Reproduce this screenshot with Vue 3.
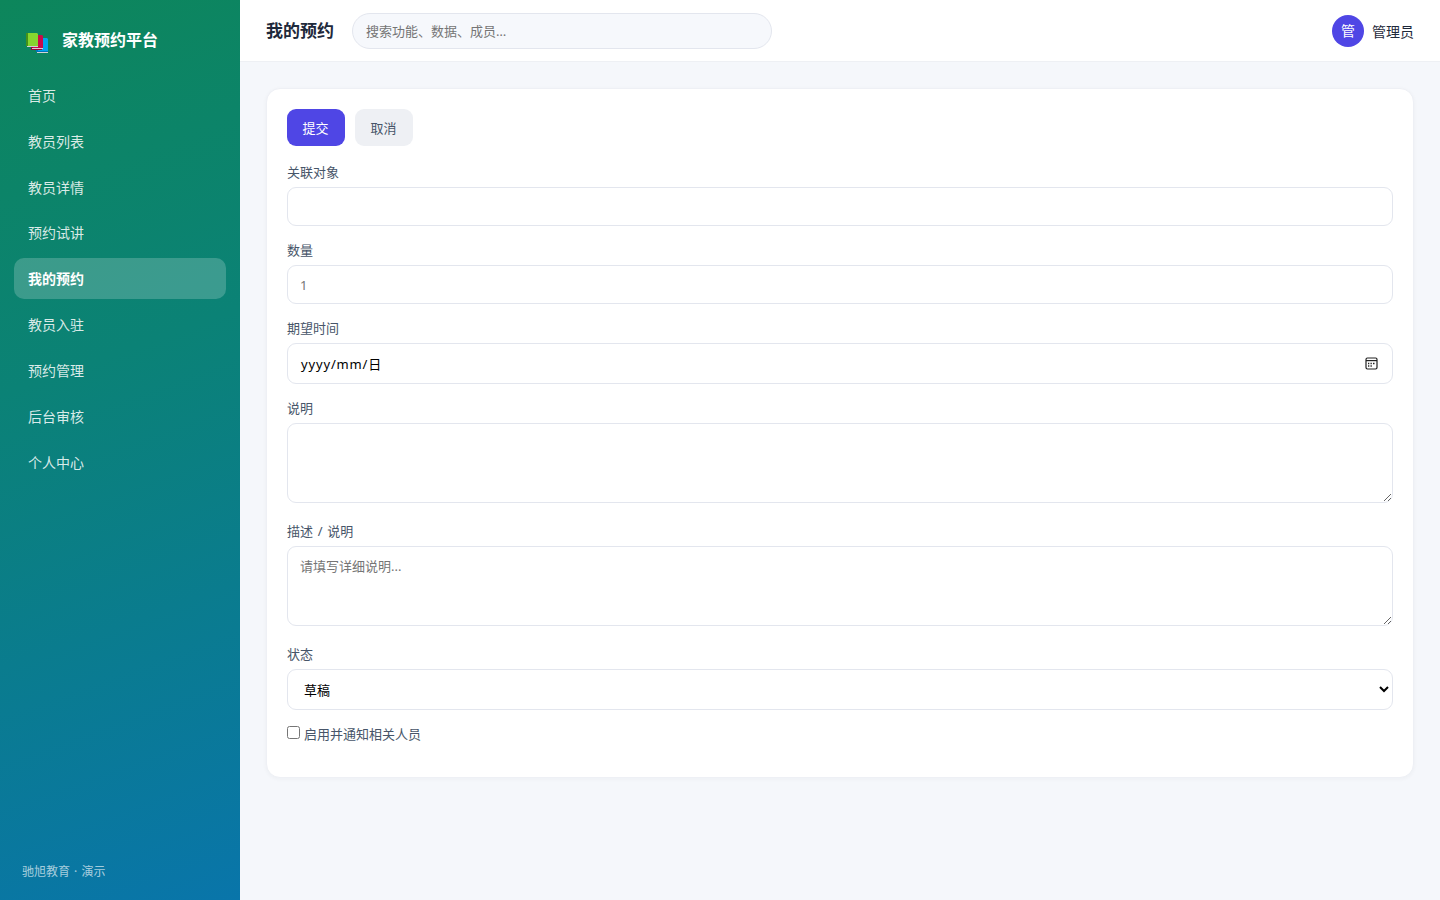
<template>
  <div class="app-shell">
    <aside class="sidebar">
      <div class="brand">
        <svg class="brand-icon" width="22" height="20" viewBox="0 0 22 20">
          <path d="M11 5h10l1 1v13H11z" fill="#00a6ed" />
          <path d="M10 17h12v2H10z" fill="#0074ba" />
          <path d="M12 17h10v1H12z" fill="#00a6ed" />
          <path d="M11 19h11v1H11z" fill="#d3d3d3" />
          <path d="M6 2h10l1 1v12H6z" fill="#ca0b4a" />
          <path d="M5 14h2v3H5zM5 16h11v1H5z" fill="#990838" />
          <path d="M6 15h11v1H6z" fill="#d3d3d3" />
          <path d="M0 0h11l1 1v12H0z" fill="#86d72f" />
          <path d="M0 0h2v13H0z" fill="#44911b" />
          <path d="M1 13h11v1H1z" fill="#d3d3d3" />
        </svg>
        <span>家教预约平台</span>
      </div>
      <nav class="nav">
        <a v-for="item in menu" :key="item" class="nav-item" :class="{ active: item === current }" @click="current = item">{{ item }}</a>
      </nav>
      <div class="side-foot">驰旭教育 · 演示</div>
    </aside>

    <div class="main">
      <header class="topbar">
        <h1>{{ current }}</h1>
        <input v-model="keyword" class="search" placeholder="搜索功能、数据、成员…" />
        <div class="user">
          <span class="avatar">管</span>
          <span>管理员</span>
        </div>
      </header>

      <main class="content">
        <form class="card" @submit.prevent>
          <div class="actions">
            <button class="btn btn-primary" type="submit">提交</button>
            <button class="btn btn-ghost" type="button" @click="reset">取消</button>
          </div>
          <div class="field">
            <label>关联对象</label>
            <input v-model="form.target" class="control" />
          </div>
          <div class="field">
            <label>数量</label>
            <input v-model="form.count" class="control" placeholder="1" />
          </div>
          <div class="field">
            <label>期望时间</label>
            <div class="control tall date">
              <span>yyyy/mm/日</span>
              <svg width="13" height="13" viewBox="0 0 13 13">
                <rect x="1" y="1" width="11" height="11" rx="1.4" fill="none" stroke="#222" stroke-width="1.2" />
                <path d="M1 3.6h11" stroke="#222" stroke-width="1.2" />
                <path d="M5.5 6.5h1.3M8 6.5h1.5M3 6.5h1.3M3 9h1.3M5.5 9h1.3" stroke="#222" stroke-width="1.3" />
              </svg>
            </div>
          </div>
          <div class="field area">
            <label>说明</label>
            <textarea v-model="form.note" class="control"></textarea>
          </div>
          <div class="field area">
            <label class="wide">描述 / 说明</label>
            <textarea v-model="form.desc" class="control" placeholder="请填写详细说明..."></textarea>
          </div>
          <div class="field">
            <label>状态</label>
            <select v-model="form.status" class="control tall">
              <option>草稿</option>
              <option>已提交</option>
              <option>已完成</option>
            </select>
          </div>
          <label class="check"><input v-model="form.notify" type="checkbox" />启用并通知相关人员</label>
        </form>
      </main>
    </div>
  </div>
</template>

<script setup>
import { ref } from 'vue'

const menu = ['首页', '教员列表', '教员详情', '预约试讲', '我的预约', '教员入驻', '预约管理', '后台审核', '个人中心']
const current = ref('我的预约')
const keyword = ref('')

const empty = () => ({ target: '', count: '', note: '', desc: '', status: '草稿', notify: false })
const form = ref(empty())

function reset() {
  form.value = empty()
}
</script>

<style>
body { margin: 0; background: #f5f7fb; }
</style>

<style scoped>
* { box-sizing: border-box; }
.app-shell { display: flex; min-height: 100vh; font-family: "Noto Sans", "Noto Sans CJK SC", sans-serif; font-size: 14px; color: #1e293b; }
input, textarea, select, button { font-family: inherit; }

.sidebar { width: 240px; height: 100vh; padding: 22px 14px 21px; display: flex; flex-direction: column; color: #fff; background: linear-gradient(160deg, #0d865b 0%, #0b8276 40%, #0975aa 100%); }
.brand { display: flex; align-items: center; gap: 14px; height: 36px; padding-left: 12px; margin-bottom: 16.8px; font-size: 16px; line-height: 22px; font-weight: 700; }
.brand-icon { margin-top: 5px; }
.brand span { padding-bottom: 1px; }
.nav { display: flex; flex-direction: column; gap: 4.9px; }
.nav-item { height: 41px; padding: 0 14px; line-height: 41px; border-radius: 10px; color: rgba(255, 255, 255, .85); cursor: pointer; }
.nav-item.active { background: rgba(255, 255, 255, .2); color: #fff; font-weight: 700; }
.side-foot { margin-top: auto; padding: 0 8px; line-height: 14px; font-size: 12px; word-spacing: 1px; color: rgba(255, 255, 255, .65); }

.main { flex: 1; min-width: 0; }
.topbar { height: 62px; display: flex; align-items: center; padding: 0 26px; background: #fff; border-bottom: 1px solid #eef0f4; }
.topbar h1 { margin: 0 18px 0 0; font-size: 17px; line-height: 24px; font-weight: 700; }
.search { width: 420px; height: 36px; padding: 0 14px 0 13px; border: 1px solid #e3e6ee; border-radius: 18px; background: #f6f8fc; font-size: 13px; outline: none; }
.search::placeholder, .control::placeholder { color: #757575; }
.user { margin-left: auto; display: flex; align-items: center; gap: 8px; }
.avatar { width: 32px; height: 32px; padding-bottom: 1px; border-radius: 50%; background: #4f46e5; color: #fff; display: flex; align-items: center; justify-content: center; }

.content { padding: 26px; }
.card { height: 690px; padding: 20px; background: #fff; border: 1px solid #eef0f5; border-radius: 14px; box-shadow: 0 1px 4px rgba(30, 41, 59, .04); }
.actions { display: flex; gap: 10px; margin-bottom: 17px; }
.btn { width: 58px; height: 37px; padding: 0 1px 1px 0; border: none; border-radius: 9px; font-size: 13px; cursor: pointer; }
.btn-primary { background: #4f46e5; color: #fff; }
.btn-ghost { background: #eef0f4; color: #475569; }
.field { display: flex; flex-direction: column; gap: 6px; margin-bottom: 15px; }
.field label, .check { font-size: 13px; line-height: 18px; color: #475569; }
.field .wide { word-spacing: 1.3px; }
.area { margin-bottom: 19px; }
.control { width: 100%; height: 39px; padding: 0 12px; border: 1px solid #e3e6ee; border-radius: 9px; background: #fff; font-size: 13px; color: #000; outline: none; }
.control.tall { height: 41px; }
textarea.control { height: 80px; padding: 10px 12px; line-height: 18px; resize: vertical; }
.date { display: flex; align-items: center; justify-content: space-between; padding-right: 14px; letter-spacing: .85px; }
.date span { padding-left: 1px; }
.check { display: flex; align-items: center; gap: 4px; }
.check input { width: 13px; height: 13px; margin: 0 0 4px; }
</style>
